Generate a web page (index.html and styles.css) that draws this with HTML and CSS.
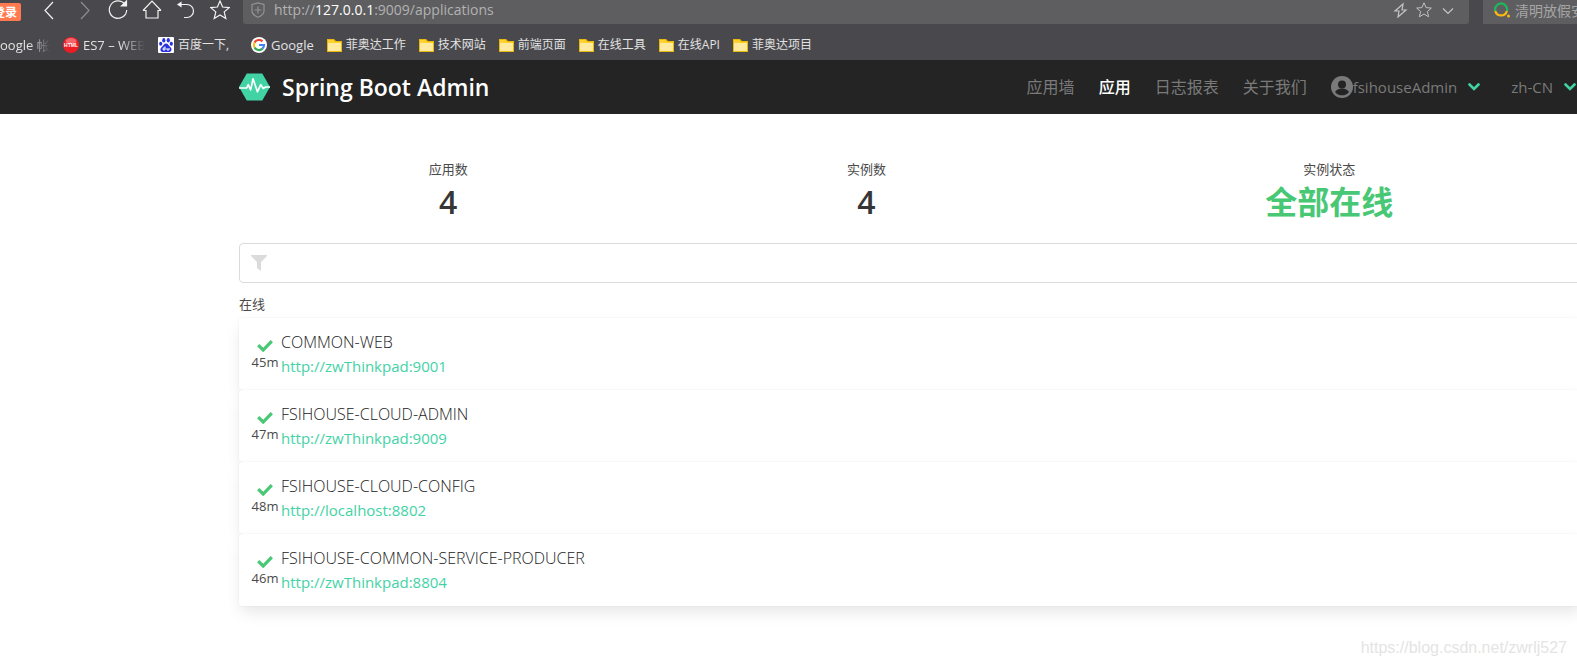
FILE: index.html
```
<!DOCTYPE html>
<html lang="zh-CN">
<head>
<meta charset="utf-8">
<title>Spring Boot Admin</title>
<link rel="stylesheet" href="styles.css">
</head>
<body>
<svg class="defs" aria-hidden="true">
  <symbol id="star" viewBox="0 0 20 20"><path d="M10 1l2.600 6 6.600.6-5 4.300 1.600 6.600-5.800-3.500-5.800 3.500 1.600-6.600-5-4.300 6.600-.6z"/></symbol>
  <symbol id="folder" viewBox="0 0 15 13" preserveAspectRatio="none"><path fill="#e8b90c" d="M0 0h7l2 2h6v11H0z"/><path fill="#ffd32e" d="M1 1h5l2 2h6v2H1z"/><path fill="#ffeaa0" d="M1 4h13v8H1z"/></symbol>
  <symbol id="check" viewBox="0 0 16 12"><path fill="none" stroke="currentColor" stroke-width="3.200" d="M1.200 5.200l5 4.800L14.800 1.200"/></symbol>
  <symbol id="arrow" viewBox="0 0 12 8"><path fill="none" stroke="currentColor" stroke-width="2.600" stroke-linecap="round" d="M1.500 1.500L6 6l4.500-4.500"/></symbol>
</svg>

<div class="browser">
  <div class="toolbar">
    <button class="login" type="button"><span>登录</span></button>
    <div class="tools">
      <button type="button" aria-label="后退"><svg viewBox="0 0 20 20"><path d="M13 2L5 10.500l8 8.500"/></svg></button>
      <button type="button" aria-label="前进" class="off"><svg viewBox="0 0 20 20"><path d="M7 2l8 8.500L7 19"/></svg></button>
      <button type="button" aria-label="刷新"><svg viewBox="0 0 20 20"><path d="M17 4.500A8.700 8.700 0 1 0 18.700 10"/><path fill="#f2f2f2" d="M18.500 1v5h-5z"/></svg></button>
      <button type="button" aria-label="主页"><svg viewBox="0 0 20 20"><path d="M1 10.500L10 1l9 9.500M1 10.500h3V18h12v-7.500h3"/></svg></button>
      <button type="button" aria-label="恢复"><svg viewBox="0 0 20 20"><path d="M3 4.500h8a6.500 6.500 0 0 1 0 13H8"/><path fill="#f2f2f2" d="M5 2.500v4L2 4.500z"/></svg></button>
      <button type="button" aria-label="收藏"><svg><use href="#star"/></svg></button>
    </div>
    <div class="address">
      <svg class="shield" viewBox="0 0 16 16"><path d="M8 .8l6 1.700v6.500c0 3-3 5-6 6.300-3-1.300-6-3.300-6-6.300V2.500zM8 4.500v7M4.500 8h7"/></svg>
      <div class="url" role="textbox" aria-label="地址">http://<span>127.0.0.1</span>:9009/applications</div>
      <button type="button" aria-label="极速"><svg viewBox="0 0 16 16"><path d="M11 2L3 9h4l-1 6 8-7h-4z"/></svg></button>
      <button type="button" aria-label="收藏本页"><svg><use href="#star"/></svg></button>
      <button type="button" aria-label="更多"><svg viewBox="0 0 16 16"><path d="M3 6.500l5 5 5-5"/></svg></button>
    </div>
    <div class="search">
      <svg viewBox="0 0 16 16" fill="none" stroke-width="2.200"><path stroke="#1fb85c" d="M1.300 9A6 6 0 1 1 12.900 9"/><path stroke="#fdb913" d="M1.300 9A6 6 0 0 0 12.900 9"/><circle cx="14.500" cy="14" r="1.500" fill="#fdb913"/></svg>
      <input type="text" aria-label="搜索" value="清明放假安排">
    </div>
  </div>
  <div class="bookmarks">
    <a href="#" class="fade first latin"><span>oogle 帐</span></a>
    <a href="#" class="fade es7 latin"><svg viewBox="0 0 16 16"><circle cx="8" cy="8" r="8" fill="#ee1c25"/><ellipse cx="8" cy="4" rx="5.500" ry="3" fill="#f5666b"/><text x="8" y="10" text-anchor="middle" class="tiny">HTML</text></svg><span>ES7 – WEB</span></a>
    <a href="#" class="baidu"><svg viewBox="0 0 16 16"><rect width="16" height="16" rx="1" fill="#fff"/><g fill="#2932e1"><ellipse cx="5.800" cy="3.200" rx="1.600" ry="2.200"/><ellipse cx="10.300" cy="3.200" rx="1.600" ry="2.200"/><ellipse cx="2.700" cy="6.700" rx="1.600" ry="2"/><ellipse cx="13.300" cy="6.700" rx="1.600" ry="2"/><path d="M8 6.500c2 0 2.500 2 4.500 3.700 2 2 .8 4.800-1.500 4.800H5c-2.500 0-3.500-2.800-1.500-4.800C5.500 8.500 6 6.500 8 6.500z"/></g><path fill="none" stroke="#fff" d="M7 9.500V13H5.200v-2H7M9 11v2h2v-2"/></svg><span>百度一下,</span></a>
    <a href="#" class="latin"><svg viewBox="0 0 16 16"><circle cx="8" cy="8" r="8" fill="#fff"/><g fill="none" stroke-width="2.200"><path stroke="#ea4335" d="M3.600 5.500A5 5 0 0 1 11.500 4.400"/><path stroke="#fbbc05" d="M3.600 5.500a5 5 0 0 0 0 5"/><path stroke="#34a853" d="M3.600 10.500a5 5 0 0 0 7.900 1.100"/><path stroke="#4285f4" d="M8 8h5a5 5 0 0 1-1.500 3.600"/></g></svg><span>Google</span></a>
    <a href="#"><svg><use href="#folder"/></svg><span>菲奥达工作</span></a>
    <a href="#"><svg><use href="#folder"/></svg><span>技术网站</span></a>
    <a href="#"><svg><use href="#folder"/></svg><span>前端页面</span></a>
    <a href="#"><svg><use href="#folder"/></svg><span>在线工具</span></a>
    <a href="#"><svg><use href="#folder"/></svg><span>在线API</span></a>
    <a href="#"><svg><use href="#folder"/></svg><span>菲奥达项目</span></a>
  </div>
</div>

<header class="navbar">
  <div class="container bar">
    <a href="#" class="brand">
      <svg viewBox="0 0 32 28"><path fill="#42d3a5" d="M8 0h16l8 14-8 14H8L0 14z"/><path fill="none" stroke="#fff" stroke-width="1.700" stroke-linejoin="round" d="M0 15h8l1.500-3.500L12 17l2.500-11.500L19 19l3.500-7.500 2.500 4L27.500 14H32"/></svg>
      <span>Spring Boot Admin</span>
    </a>
    <nav class="menu">
      <a href="#">应用墙</a>
      <a href="#" class="active">应用</a>
      <a href="#">日志报表</a>
      <a href="#">关于我们</a>
      <a href="#" class="drop"><svg class="user" viewBox="0 0 22 22"><circle cx="11" cy="11" r="11" fill="#7a7a7a"/><circle cx="11" cy="8.500" r="4" fill="#242424"/><path fill="#242424" d="M4 16c2-3 4-3.500 7-3.500s5 .5 7 3.500a9 9 0 0 1-14 0z"/></svg><span>fsihouseAdmin</span><svg class="arrow"><use href="#arrow"/></svg></a>
      <a href="#" class="drop"><span>zh-CN</span><svg class="arrow"><use href="#arrow"/></svg></a>
    </nav>
  </div>
</header>

<main class="container">
  <section class="level">
    <div><p class="heading">应用数</p><p class="title">4</p></div>
    <div><p class="heading">实例数</p><p class="title">4</p></div>
    <div><p class="heading">实例状态</p><p class="title up">全部在线</p></div>
  </section>
  <label class="filter">
    <svg viewBox="0 0 16 16"><path fill="#dbdbdb" d="M0 0h16v1l-6 6v9l-4-3V7L0 1z"/></svg>
    <input type="text" aria-label="筛选">
  </label>
  <h2 class="group">在线</h2>
  <ul class="apps">
    <li><div class="status"><svg><use href="#check"/></svg><small>45m</small></div><div class="info"><p>COMMON-WEB</p><a href="#">http://zwThinkpad:9001</a></div></li>
    <li><div class="status"><svg><use href="#check"/></svg><small>47m</small></div><div class="info"><p>FSIHOUSE-CLOUD-ADMIN</p><a href="#">http://zwThinkpad:9009</a></div></li>
    <li><div class="status"><svg><use href="#check"/></svg><small>48m</small></div><div class="info"><p>FSIHOUSE-CLOUD-CONFIG</p><a href="#">http://localhost:8802</a></div></li>
    <li><div class="status"><svg><use href="#check"/></svg><small>46m</small></div><div class="info"><p>FSIHOUSE-COMMON-SERVICE-PRODUCER</p><a href="#">http://zwThinkpad:8804</a></div></li>
  </ul>
</main>
<footer class="credit">https://blog.csdn.net/zwrlj527</footer>
</body>
</html>
```
FILE: styles.css
```
*, *::before, *::after { box-sizing: border-box; }
html { overflow: hidden; background: #fff; }
body {
  margin: 0;
  overflow-x: clip;
  color: #4a4a4a;
  font: 400 15px/24px "Open Sans", "Noto Sans CJK SC", sans-serif;
}
p, ul, h2 { margin: 0; padding: 0; }
a { color: inherit; text-decoration: none; }
button { padding: 0; border: 0; background: none; }
svg { display: block; flex: none; }
.defs { display: none; }

.browser { background: #49494d; color: #e2e2e2; }
.toolbar { display: flex; height: 24px; }
.login {
  display: flex;
  justify-content: flex-end;
  align-self: flex-start;
  width: 21px;
  height: 18px;
  margin-top: 3px;
  padding-right: 4px;
  border-radius: 0 2px 2px 0;
  background: #ff7a50;
  overflow: hidden;
  color: #fff;
  font: 700 12px/18px "Noto Sans CJK SC", sans-serif;
  white-space: nowrap;
}
.tools { display: flex; align-items: flex-start; gap: 14px; padding: 0 13px 0 19px; }
.tools svg { width: 20px; height: 20px; fill: none; stroke: #f2f2f2; stroke-width: 1.2; }
.tools .off { opacity: .4; }
.address {
  display: flex;
  flex: 1;
  align-items: center;
  gap: 8px;
  padding: 0 13px 4px 7px;
  border-radius: 0 0 3px 3px;
  background: #5e5e60;
}
.address svg { width: 16px; height: 16px; fill: none; stroke: #c4c4c4; stroke-width: 1.2; }
.address .shield { stroke: #929294; }
.url { flex: 1; color: #b2b2b2; font-size: 14px; line-height: 20px; }
.url span { color: #fff; }
.search {
  display: flex;
  align-items: center;
  gap: 5px;
  width: 94px;
  margin-left: 14px;
  padding: 0 0 4px 11px;
  overflow: hidden;
  background: #5e5e60;
}
.search svg { width: 16px; height: 16px; }
.search input {
  width: 100px;
  flex: none;
  padding: 0;
  border: 0;
  background: none;
  color: #a6a6a6;
  font: 400 14px/20px "Noto Sans CJK SC", sans-serif;
}
.bookmarks {
  display: flex;
  align-items: center;
  gap: 13px;
  height: 36px;
  padding-top: 6px;
  font-size: 12px;
  line-height: 18px;
  white-space: nowrap;
}
.bookmarks a { display: flex; align-items: center; gap: 4px; }
.bookmarks svg { width: 16px; height: 16px; }
.bookmarks svg:has(use) { width: 15px; height: 13px; }
.bookmarks .latin { font-size: 13px; }
.bookmarks .fade span { overflow: hidden; mask-image: linear-gradient(90deg, #000 60%, transparent); }
.bookmarks .first { width: 50px; }
.bookmarks .es7 { width: 82px; }
.bookmarks .baidu { width: 80px; }
.tiny { fill: #fff; font: 700 5px "Liberation Sans", sans-serif; }

.container { margin-left: 239px; margin-right: -6px; }
.navbar { background: #242424; }
.bar { display: flex; justify-content: space-between; height: 54px; }
.brand { display: flex; align-items: center; gap: 12px; color: #fff; font-size: 23px; font-weight: 600; line-height: 36px; white-space: nowrap; }
.brand svg { width: 31px; height: 28px; }
.menu { display: flex; margin-right: -12px; color: #7a7a7a; font-size: 16px; white-space: nowrap; }
.menu a { display: flex; align-items: center; padding: 0 12px; }
.menu .active { color: #fff; font-weight: 500; }
.menu .drop { padding-right: 19px; font-size: 15px; }
.user { width: 22px; height: 22px; }
.arrow { width: 12px; height: 8px; margin-left: 11px; color: #42d3a5; }

.level { display: flex; padding: 47px 0 23px; text-align: center; }
.level div { flex: 1 0 auto; }
.heading { margin-bottom: 7px; font-size: 13px; line-height: 16px; }
.title { color: #363636; font-size: 32px; font-weight: 600; line-height: 36px; }
.up { color: #48c774; font-weight: 700; }
.filter {
  display: flex;
  align-items: center;
  height: 40px;
  padding-left: 11px;
  border: 1px solid #dbdbdb;
  border-radius: 4px;
}
.filter svg { width: 16px; height: 16px; }
.filter input { flex: 1; padding: 0 12px; border: 0; outline: 0; background: none; font: inherit; }
.group { margin: 11px 0 4px; font-size: 13px; font-weight: 400; line-height: 20px; }
.apps { list-style: none; }
.apps li {
  display: flex;
  gap: 2px;
  padding: 12px;
  border-radius: 4px;
  background: #fff;
  box-shadow: 0 8px 16px -2px rgba(10, 10, 10, .1), 0 0 0 1px rgba(10, 10, 10, .02);
}
.status { display: flex; flex-direction: column; align-items: center; width: 28px; padding-top: 10px; color: #48c774; }
.status svg { width: 16px; height: 12px; }
.status small { color: #4a4a4a; font-size: 13px; line-height: 20px; }
.info p { color: #222; font-size: 16px; font-weight: 300; }
.info a { display: block; color: #42d3a5; }
.credit { padding: 30px 10px 6px; color: #e4e4e4; font: 400 16px/24px "Liberation Sans", sans-serif; text-align: right; }
```
